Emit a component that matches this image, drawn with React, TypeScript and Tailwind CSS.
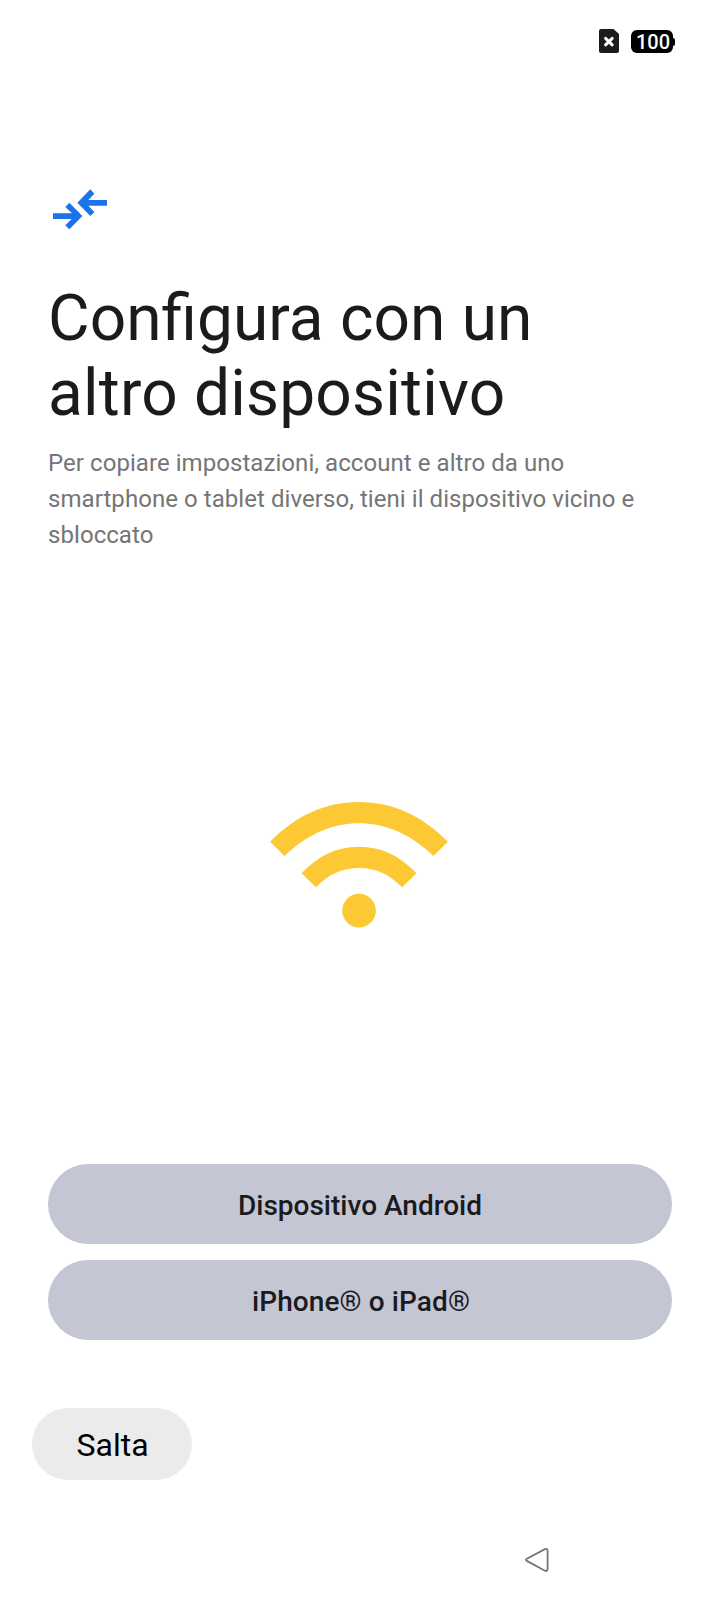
function StatusBar() {
  return (
    <header className="flex h-[82px] items-center justify-end pr-[45px]">
      <svg className="mr-3 h-6 w-5" viewBox="0 0 20 24">
        <path d="M2 0H14.5L20 5V22Q20 24 18 24H2Q0 24 0 22V2Q0 0 2 0Z" fill="#1b1b1d" />
        <path d="M6.6 9.4L13.2 15.8M13.2 9.4L6.6 15.8" stroke="#fff" strokeWidth="3" strokeLinecap="round" />
      </svg>
      <div className="mt-px flex items-center">
        <span className="flex h-[23px] w-[42px] items-center justify-center rounded-[6px] bg-black pt-0.5 pl-[2px] text-[20px] leading-[23px] font-medium text-white">
          100
        </span>
        <span className="h-2 w-0.5 rounded-r-sm bg-black" />
      </div>
    </header>
  )
}

function TransferIcon() {
  return (
    <svg className="h-10 w-[54px]" viewBox="0 -2 162 120" fill="#1a73e8">
      <path d="M0 70.5H57L37 52L49 39.5L88 79L49 119L37 107L56 88H0Z" />
      <path d="M162 31H106L124 12L112 -1L73 39.5L112 79L124 67L106 48H162Z" />
    </svg>
  )
}

function WifiIcon() {
  return (
    <svg className="h-[126px] w-[178px]" viewBox="62 66 533 378" fill="#fcc934">
      <path d="M62 185C138 108 227 66 328.5 66S519 108 595 185L552 228C474 155 401 130 328.5 130S183 155 105 228Z" />
      <path d="M156 280C205 228 261 200 328.5 200S452 228 501 280L458 322C419 282 378 264 328.5 264S238 282 199 322Z" />
      <circle cx="328.5" cy="392" r="50.5" />
    </svg>
  )
}

export default function App() {
  return (
    <div className="flex h-[1604px] w-[720px] flex-col bg-white font-['Roboto',sans-serif]">
      <StatusBar />

      <main className="flex flex-1 flex-col px-12">
        <div className="mt-[107px] ml-[5px]">
          <TransferIcon />
        </div>
        <h1 className="mt-[52px] text-[64px] leading-[75px] text-[#1b1b1b]">
          <span className="block [word-spacing:0.6px]">Configura con un</span>
          <span className="block tracking-[0.2px]">altro dispositivo</span>
        </h1>
        <p className="mt-[14px] text-2xl leading-9 tracking-[0.06px] text-[#757575]">
          Per copiare impostazioni, account e altro da uno
          <br />
          smartphone o tablet diverso, tieni il dispositivo vicino e
          <br />
          sbloccato
        </p>

        <div className="mt-[249px] flex justify-center pr-[2px]">
          <WifiIcon />
        </div>

        <div className="mt-auto flex flex-col gap-4 text-[28px] font-medium text-[#1a1b1f]">
          <button className="h-20 rounded-full bg-[#c5c6d4] pt-1">Dispositivo Android</button>
          <button className="h-20 rounded-full bg-[#c5c6d4] pt-1 pl-0.5 tracking-[0.1px]">
            iPhone<span className="font-normal">®</span> o iPad<span className="font-normal">®</span>
          </button>
        </div>
      </main>

      <div className="mt-[68px] px-8">
        <button className="h-[72px] w-40 rounded-full bg-[#ebebeb] pt-0.5 pl-px text-[32px] text-black">
          Salta
        </button>
      </div>

      {/* System navigation */}
      <nav className="flex h-[124px] items-start justify-end pt-[67px] pr-[170px]">
        <svg className="h-[26px] w-[26px]" viewBox="-0.7 -0.5 26 26" fill="none" stroke="#757575" strokeWidth="1.8">
          <path d="M2.1 11.3L20.3 1.6Q22.7 0.6 22.9 3.2V21.6Q22.7 24.2 20.3 23.2L2.1 13.4Q0.4 12.3 2.1 11.3Z" />
        </svg>
      </nav>
    </div>
  )
}
